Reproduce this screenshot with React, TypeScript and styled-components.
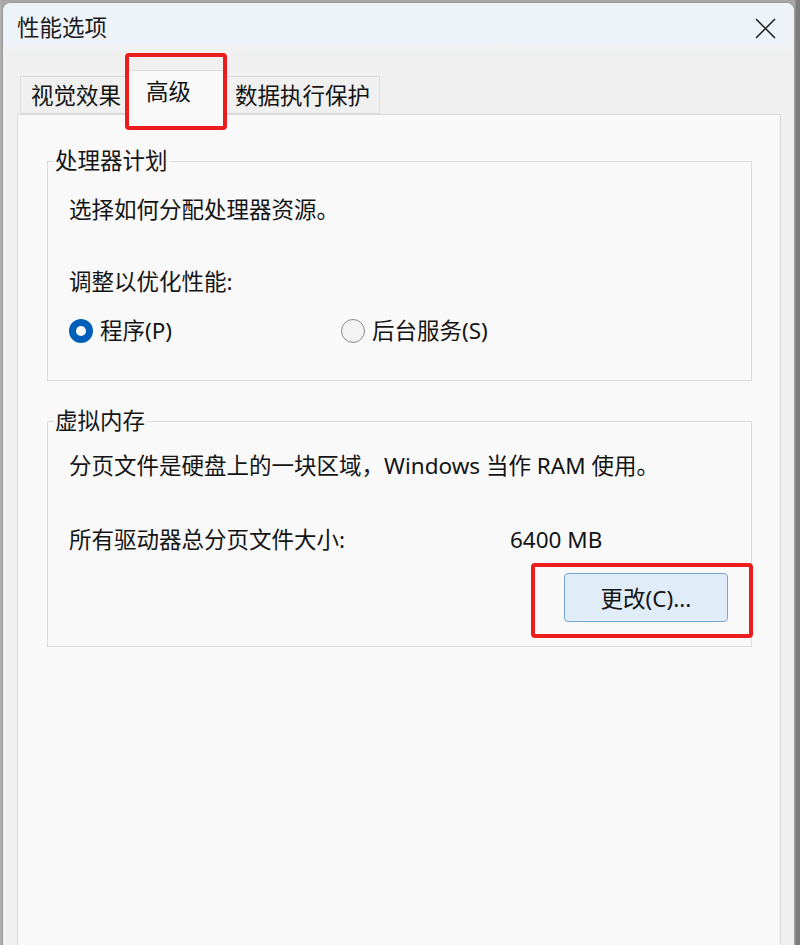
import React from "react";
import styled, { createGlobalStyle } from "styled-components";

const Global = createGlobalStyle`
  html, body { margin: 0; padding: 0; }
  body {
    width: 800px;
    height: 945px;
    overflow: hidden;
    background: #a9a9a9;
    font-family: "Noto Sans", "Noto Sans CJK SC", sans-serif;
    color: #141414;
  }
`;

const Screen = styled.div`
  display: flex;
  height: 945px;
  padding: 2px 5px 0 2px;
  box-sizing: border-box;
  background: linear-gradient(90deg, #b4b4b4 0, #a6a6a6 2px, #a6a6a6 795px, #7c7c7c 796px);
`;

const Window = styled.div`
  flex: 1;
  display: flex;
  flex-direction: column;
  background: #f0f0f0;
  border: 1px solid #9a9a9a;
  border-bottom: none;
  border-radius: 9px 9px 0 0;
  overflow: hidden;
  font-size: 22.5px;
  line-height: 30px;
`;

const TitleBar = styled.div`
  height: 50px;
  flex: none;
  display: flex;
  align-items: center;
  justify-content: space-between;
  padding: 0 18px 0 14px;
  background: linear-gradient(180deg, #eef3f9 0, #eef3f9 38px, #f0f0f0 50px);
`;

const Title = styled.span`
  font-size: 22.5px;
  color: #1b1b1b;
`;

const CloseIcon = styled.svg`
  width: 21px;
  height: 21px;
  display: block;
`;

const Body = styled.div`
  flex: 1;
  display: flex;
  flex-direction: column;
  padding: 17px 13px 0 14px;
`;

const TabRow = styled.div`
  display: flex;
  align-items: flex-end;
  height: 44px;
  padding-left: 3px;
  position: relative;
  z-index: 2;
`;

const Tab = styled.div<{ $active?: boolean; $w: number; $pl: number }>`
  position: relative;
  box-sizing: border-box;
  width: ${(p) => p.$w}px;
  height: ${(p) => (p.$active ? 45 : 38)}px;
  margin-bottom: ${(p) => (p.$active ? -1 : 0)}px;
  padding-left: ${(p) => p.$pl}px;
  padding-top: ${(p) => (p.$active ? 6 : 4)}px;
  background: ${(p) => (p.$active ? "#f9f9f9" : "#f0f0f0")};
  border: 1px solid #dadada;
  border-bottom: ${(p) => (p.$active ? "none" : "1px solid #dadada")};
  font-size: 22.5px;
  line-height: 30px;
  white-space: nowrap;
`;

const Highlight = styled.div<{ $t: number; $r: number; $b: number; $l: number }>`
  position: absolute;
  top: ${(p) => p.$t}px;
  right: ${(p) => p.$r}px;
  bottom: ${(p) => p.$b}px;
  left: ${(p) => p.$l}px;
  border: 4px solid #ee1d1d;
  border-radius: 4px;
  pointer-events: none;
  z-index: 5;
`;

const Panel = styled.div`
  flex: 1;
  background: #f9f9f9;
  border: 1px solid #d9d9d9;
  border-bottom: none;
  padding: 31px 28px 0 29px;
  display: flex;
  flex-direction: column;
  gap: 25px;
`;

const Group = styled.fieldset<{ $pt: number; $pb: number }>`
  margin: 0;
  min-inline-size: 0;
  border: 1px solid #dcdcdc;
  padding: ${(p) => p.$pt}px 0 ${(p) => p.$pb}px 21px;
  display: flex;
  flex-direction: column;
`;

const Legend = styled.legend`
  margin-left: -15px;
  padding: 0 2px 0 1px;
  font-size: 22.5px;
  line-height: 30px;
`;

const Line = styled.div<{ $mt?: number }>`
  margin-top: ${(p) => p.$mt ?? 0}px;
  white-space: nowrap;
`;

const RadioRow = styled.div`
  margin-top: 19px;
  display: grid;
  grid-template-columns: 272px auto;
`;

const RadioItem = styled.label`
  display: flex;
  align-items: center;
  gap: 7px;
`;

const RadioDot = styled.span<{ $checked?: boolean }>`
  box-sizing: border-box;
  width: 24px;
  height: 24px;
  border-radius: 50%;
  flex: none;
  display: flex;
  align-items: center;
  justify-content: center;
  background: ${(p) => (p.$checked ? "#005fb8" : "#f3f3f3")};
  border: ${(p) => (p.$checked ? "none" : "1.5px solid #8a8a8a")};
  &::after {
    content: "";
    display: ${(p) => (p.$checked ? "block" : "none")};
    width: 10px;
    height: 10px;
    border-radius: 50%;
    background: #ffffff;
  }
`;

const SizeRow = styled.div`
  margin-top: 44px;
  display: grid;
  grid-template-columns: 441px auto;
`;

const ButtonRow = styled.div`
  margin-top: 18px;
  display: flex;
  justify-content: flex-end;
  padding-right: 23px;
`;

const ButtonWrap = styled.div`
  position: relative;
`;

const Button = styled.button`
  box-sizing: border-box;
  width: 164px;
  height: 49px;
  border: 1px solid #7ba6d8;
  border-radius: 4px;
  background: #e0ecf8;
  font-family: inherit;
  font-size: 22.5px;
  color: #141414;
  padding: 0;
  cursor: default;
`;

export default function App() {
  return (
    <>
      <Global />
      <Screen>
        <Window>
          <TitleBar>
            <Title>性能选项</Title>
            <CloseIcon viewBox="0 0 21 21">
              <path d="M1 1 L20 20 M20 1 L1 20" stroke="#1a1a1a" strokeWidth="1.5" fill="none" />
            </CloseIcon>
          </TitleBar>
          <Body>
            <TabRow>
              <Tab $w={107} $pl={10}>视觉效果</Tab>
              <Tab $active $w={99} $pl={18}>
                高级
                <Highlight $t={-18} $r={-2} $b={-15} $l={-3} />
              </Tab>
              <Tab $w={154} $pl={8}>数据执行保护</Tab>
            </TabRow>
            <Panel>
              <Group $pt={19} $pb={34}>
                <Legend>处理器计划</Legend>
                <Line>选择如何分配处理器资源。</Line>
                <Line $mt={42}>调整以优化性能:</Line>
                <RadioRow>
                  <RadioItem>
                    <RadioDot $checked />
                    程序(P)
                  </RadioItem>
                  <RadioItem>
                    <RadioDot />
                    后台服务(S)
                  </RadioItem>
                </RadioRow>
              </Group>
              <Group $pt={15} $pb={24}>
                <Legend>虚拟内存</Legend>
                <Line>分页文件是硬盘上的一块区域，Windows 当作 RAM 使用。</Line>
                <SizeRow>
                  <span>所有驱动器总分页文件大小:</span>
                  <span>6400 MB</span>
                </SizeRow>
                <ButtonRow>
                  <ButtonWrap>
                    <Button>更改(C)...</Button>
                    <Highlight $t={-10} $r={-25} $b={-16} $l={-33} />
                  </ButtonWrap>
                </ButtonRow>
              </Group>
            </Panel>
          </Body>
        </Window>
      </Screen>
    </>
  );
}
